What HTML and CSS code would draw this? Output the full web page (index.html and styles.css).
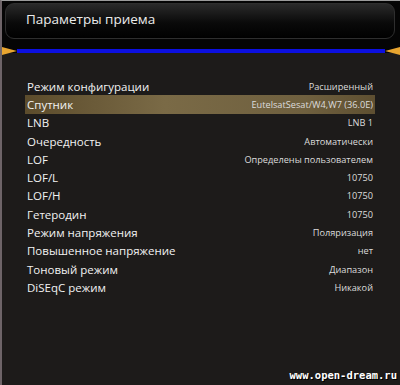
FILE: index.html
```html
<!DOCTYPE html>
<html lang="ru">
<head>
    <meta charset="UTF-8">
    <title>Параметры приема</title>
    <link rel="stylesheet" href="styles.css">
</head>
<body>
    <div class="screen">
        <div class="top">
            <div class="header">Параметры приема</div>
            <div class="rule">
                <span class="tip tip-left"></span>
                <span class="line"></span>
                <span class="tip tip-right"></span>
            </div>
        </div>

        <div class="list">
            <div class="row"><span class="label">Режим конфигурации</span><span class="value">Расширенный</span></div>
            <div class="row selected"><span class="label">Спутник</span><span class="value">EutelsatSesat/W4,W7 (36.0E)</span></div>
            <div class="row"><span class="label">LNB</span><span class="value">LNB 1</span></div>
            <div class="row"><span class="label">Очередность</span><span class="value">Автоматически</span></div>
            <div class="row"><span class="label">LOF</span><span class="value">Определены пользователем</span></div>
            <div class="row"><span class="label">LOF/L</span><span class="value">10750</span></div>
            <div class="row"><span class="label">LOF/H</span><span class="value">10750</span></div>
            <div class="row"><span class="label">Гетеродин</span><span class="value">10750</span></div>
            <div class="row"><span class="label">Режим напряжения</span><span class="value">Поляризация</span></div>
            <div class="row"><span class="label">Повышенное напряжение</span><span class="value">нет</span></div>
            <div class="row"><span class="label">Тоновый режим</span><span class="value">Диапазон</span></div>
            <div class="row"><span class="label">DiSEqC режим</span><span class="value">Никакой</span></div>
        </div>

        <div class="footer">www.open-dream.ru</div>
    </div>
</body>
</html>
```

FILE: styles.css
```css
html, body {
    margin: 0;
    padding: 0;
}
body {
    width: 400px;
    height: 385px;
    background-color: #1d1b1a;
    font-family: 'Open Sans', 'DejaVu Sans', sans-serif;
    color: #f0f0f0;
    overflow: hidden;
}
.screen {
    box-sizing: border-box;
    width: 400px;
    height: 385px;
    display: flex;
    flex-direction: column;
    border-left: 2px solid #6e6468;
    border-top: 1px solid #9a9a9a;
}
.top {
    background-color: #050505;
    padding: 2px 5px 0 3px;
    height: 52px;
    box-sizing: border-box;
}
.header {
    height: 36px;
    box-sizing: border-box;
    border: 1px solid #2e2e2e;
    border-radius: 9px;
    background: linear-gradient(#2a2a2a, #0a0a0a 55%, #000);
    padding-left: 20px;
    line-height: 30px;
    font-size: 13.5px;
    color: #ececec;
}
.rule {
    display: flex;
    align-items: center;
    margin: 7px -5px 0 -3px;
    height: 9px;
}
.line {
    flex: 1;
    height: 4px;
    background-color: #0c10e0;
}
.tip {
    width: 0;
    height: 0;
    border-top: 4px solid transparent;
    border-bottom: 4px solid transparent;
}
.tip-left {
    border-left: 15px solid #e8a530;
}
.tip-right {
    border-right: 15px solid #e8a530;
}
.list {
    padding: 24px 25px 0 23px;
    display: flex;
    flex-direction: column;
}
.row {
    height: 18.3px;
    display: flex;
    align-items: center;
    justify-content: space-between;
    padding: 0 2px;
}
.label {
    font-size: 11.5px;
    color: #f2f2f2;
}
.value {
    font-size: 9.2px;
    color: #dcdcdc;
}
.selected {
    height: 19px;
    margin: 0 0 -0.7px 0;
    background: linear-gradient(90deg, #5c4c2c, #7a6a46 40%, #6f603f 80%, #5e4f31);
}
.footer {
    margin-top: auto;
    align-self: flex-end;
    padding: 0 3px 4px 0;
    font-family: 'DejaVu Sans Mono', monospace;
    font-weight: bold;
    font-size: 10.5px;
    color: #ffffff;
    text-shadow: 1px 1px 0 #000;
}
```
